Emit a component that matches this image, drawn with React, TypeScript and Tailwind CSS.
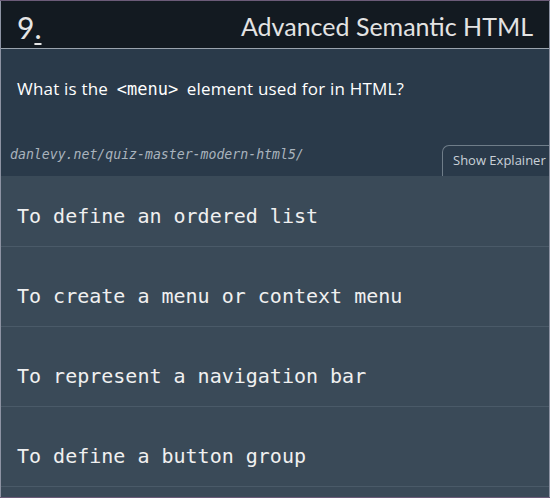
const answers = [
  "To define an ordered list",
  "To create a menu or context menu",
  "To represent a navigation bar",
  "To define a button group",
];

export default function App() {
  return (
    <div className="w-[550px] h-[498px] overflow-hidden bg-[#6b5b78] pt-px pb-px">
      <div className="h-full border-x border-[#8d93a3] bg-[#3a4a58] flex flex-col">
        <header className="h-[48px] bg-[#131a21] flex items-center justify-between pl-4 pr-4 border-b border-[#9aa3ad]">
          <div className="text-[30px] leading-none text-[#e6e6e6] font-['Lato',sans-serif] mt-1">
            9<span className="underline decoration-2 underline-offset-4">.</span>
          </div>
          <h1 className="text-[25px] leading-none text-[#e3e3e3] font-['Lato',sans-serif] mt-1">
            Advanced Semantic HTML
          </h1>
        </header>

        <section className="bg-[#2a3a4a] h-[127px] flex flex-col">
          <p className="pl-4 pt-[27px] text-[17px] text-white font-['Open_Sans',sans-serif] tracking-[0.2px]">
            What is the{" "}
            <code className="font-['DejaVu_Sans_Mono',monospace] text-[17px] tracking-normal px-1">&lt;menu&gt;</code>{" "}
            element used for in HTML?
          </p>
          <div className="mt-auto flex items-end justify-between">
            <span className="pl-[9px] pb-[11px] italic text-[13.2px] text-[#a9b3bd] font-['DejaVu_Sans_Mono',monospace]">
              danlevy.net/quiz-master-modern-html5/
            </span>
            <button className="h-[31px] w-[107px] rounded-tl-[7px] border-l border-t border-[#6f7d89] text-[13px] text-[#c9d1d8] font-['Open_Sans',sans-serif] text-left pl-[10px]">
              Show Explainer
            </button>
          </div>
        </section>

        <ul className="flex flex-col">
          {answers.map((a, i) => (
            <li
              key={a}
              className={`border-b border-[#4a5a68] pl-4 text-[20px] text-[#f0f0f0] font-['DejaVu_Sans_Mono',monospace] ${
                i === 0 ? "h-[71px] pt-[25px]" : "h-[80px] pt-[34px]"
              }`}
            >
              {a}
            </li>
          ))}
        </ul>
      </div>
    </div>
  );
}
